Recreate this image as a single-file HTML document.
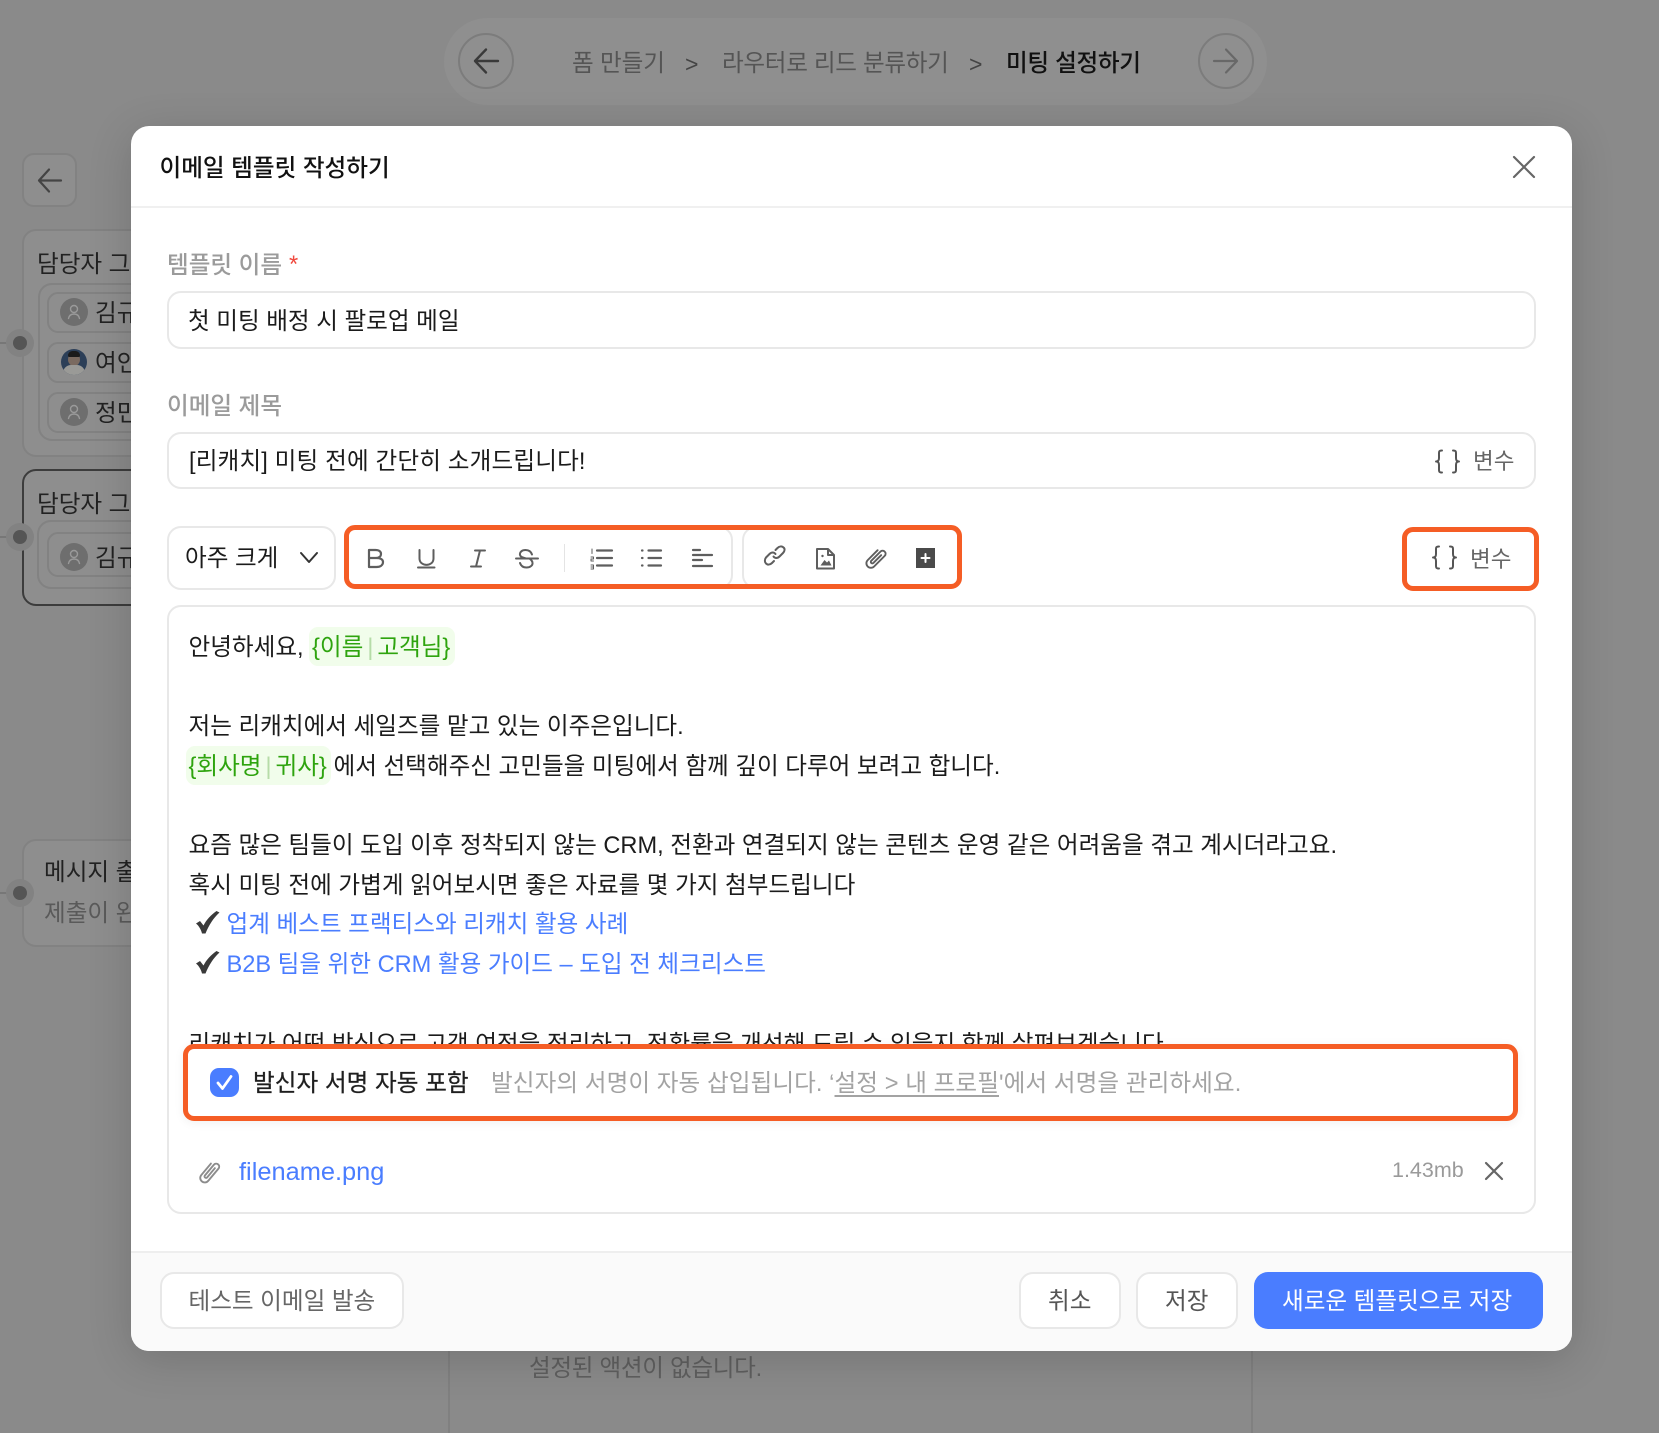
<!DOCTYPE html>
<html lang="ko"><head><meta charset="utf-8"><title>이메일 템플릿 작성하기</title>
<style>
html,body{margin:0;padding:0;width:1659px;height:1433px;overflow:hidden;background:#8a8a8a}
*{box-sizing:border-box}
body{position:relative;font-family:"Liberation Sans","Noto Sans CJK KR",sans-serif;font-size:23.6px;color:#1b1b1b}
.a{position:absolute}
.t{position:absolute;white-space:nowrap;line-height:40px;height:40px;margin-top:-18px}
.box{position:absolute;border:2px solid #e8e8e8;border-radius:14px;background:#fff}
.bg{position:absolute;border:2px solid #828282;border-radius:14px;background:#8e8e8e}
.or{position:absolute;border:5px solid #f55d25;border-radius:11px}
.dot{position:absolute;width:28px;height:28px;border-radius:50%;background:#828282}
.dot:after{content:"";position:absolute;left:7px;top:7px;width:14px;height:14px;border-radius:50%;background:#555}
.av{position:absolute;width:28px;height:28px;border-radius:50%;background:#6e6e6e}
svg{position:absolute;overflow:visible;fill:none;stroke-linecap:round;stroke-linejoin:round}
.chip{color:#2ea40e;background:#f1fdeb;border-radius:9px;position:absolute;height:39px}
.link{color:#4a7dff}
.btn{position:absolute;border:2px solid #e8e8e8;border-radius:14px;background:#fff}
.pipe{color:#b6dca8;font-size:24px;margin:0 3.900px}
.ck{fill:#3a3a3a}
</style></head><body>

<!-- backdrop -->
<div class="a" style="left:444px;top:18px;width:823px;height:87px;border-radius:44px;background:#8f8f8f"></div>
<div class="a" style="left:458px;top:33px;width:56px;height:56px;border-radius:50%;border:2px solid #7c7c7c;background:#8f8f8f"></div>
<svg style="left:474px;top:47px" width="26" height="28" stroke="#3a3a3a" stroke-width="2.4"><path d="M1 14H24M12 2.500L1 14L12 25.500"/></svg>
<div class="t" style="left:572px;top:62px;color:#555;letter-spacing:-.1px">폼 만들기</div>
<div class="t" style="left:685px;top:62px;color:#444;font-size:23px">&gt;</div>
<div class="t" style="left:722px;top:62px;color:#555;letter-spacing:-.3px">라우터로 리드 분류하기</div>
<div class="t" style="left:969px;top:62px;color:#444;font-size:23px">&gt;</div>
<div class="t" style="left:1006px;top:62px;color:#111;font-weight:500;letter-spacing:-.3px">미팅 설정하기</div>
<div class="a" style="left:1198px;top:33px;width:56px;height:56px;border-radius:50%;border:2px solid #7c7c7c"></div>
<svg style="left:1212px;top:47px" width="26" height="28" stroke="#686868" stroke-width="2.2"><path d="M2 14H25M14 2.500L25 14L14 25.500"/></svg>

<div class="a" style="left:22px;top:153px;width:55px;height:54px;border:2px solid #828282;border-radius:12px;background:#8e8e8e"></div>
<svg style="left:37px;top:168px" width="26" height="26" stroke="#444" stroke-width="2.2"><path d="M2 12.500H24M12 1.500L2 12.500L12 23.500"/></svg>

<div class="bg" style="left:22px;top:229px;width:200px;height:228px"></div>
<div class="t" style="left:37px;top:263px;color:#222">담당자 그룹</div>
<div class="bg" style="left:38px;top:283px;width:200px;height:158px"></div>
<div class="bg" style="left:47px;top:292px;width:200px;height:41px;border-radius:11px"></div>
<div class="bg" style="left:47px;top:342px;width:200px;height:41px;border-radius:11px"></div>
<div class="bg" style="left:47px;top:392px;width:200px;height:41px;border-radius:11px"></div>
<div class="av" style="left:60px;top:298px"></div>
<svg style="left:60px;top:298px" width="28" height="28" stroke="#9a9a9a" stroke-width="1.4"><circle cx="14" cy="11" r="3.500"/><path d="M8.500 20.500c.6-3 2.700-4.500 5.500-4.500s4.900 1.500 5.500 4.500"/></svg>
<div class="av" style="left:61px;top:349px;width:26px;height:26px;background:#2c3f58;overflow:hidden">
<div class="a" style="left:7px;top:4px;width:12px;height:13px;border-radius:50%;background:#7a6a60"></div>
<div class="a" style="left:7px;top:2px;width:12px;height:6px;border-radius:6px 6px 2px 2px;background:#1b1b1b"></div>
<div class="a" style="left:2px;top:16px;width:22px;height:12px;border-radius:8px 8px 0 0;background:#9a9a97"></div></div>
<div class="av" style="left:60px;top:398px"></div>
<svg style="left:60px;top:398px" width="28" height="28" stroke="#9a9a9a" stroke-width="1.4"><circle cx="14" cy="11" r="3.500"/><path d="M8.500 20.500c.6-3 2.700-4.500 5.500-4.500s4.900 1.500 5.500 4.500"/></svg>
<div class="t" style="left:95px;top:312px;color:#222">김규리</div>
<div class="t" style="left:95px;top:362px;color:#222">여인영</div>
<div class="t" style="left:95px;top:412px;color:#222">정민수</div>
<div class="a" style="left:0;top:342px;width:8px;height:2px;background:#777"></div>
<div class="dot" style="left:6px;top:329px"></div>

<div class="bg" style="left:22px;top:469px;width:200px;height:137px;border-color:#3c3c3c"></div>
<div class="t" style="left:37px;top:503px;color:#222">담당자 그룹</div>
<div class="bg" style="left:37px;top:520px;width:200px;height:69px"></div>
<div class="bg" style="left:47px;top:532px;width:200px;height:45px;border-radius:11px"></div>
<div class="av" style="left:60px;top:543px"></div>
<svg style="left:60px;top:543px" width="28" height="28" stroke="#9a9a9a" stroke-width="1.4"><circle cx="14" cy="11" r="3.500"/><path d="M8.500 20.500c.6-3 2.700-4.500 5.500-4.500s4.900 1.500 5.500 4.500"/></svg>
<div class="t" style="left:95px;top:557px;color:#222">김규리</div>
<div class="a" style="left:0;top:536px;width:8px;height:2px;background:#777"></div>
<div class="dot" style="left:6px;top:523px"></div>

<div class="bg" style="left:22px;top:839px;width:200px;height:108px"></div>
<div class="t" style="left:44px;top:871px;color:#222">메시지 출력</div>
<div class="t" style="left:44px;top:912px;color:#5a5a5a">제출이 완료</div>
<div class="a" style="left:0;top:892px;width:8px;height:2px;background:#777"></div>
<div class="dot" style="left:6px;top:879px"></div>

<div class="a" style="left:448px;top:1300px;width:805px;height:140px;border-left:2px solid #808080;border-right:2px solid #808080;background:#8a8a8a"></div>
<div class="t" style="left:529px;top:1367px;color:#5f5f5f;letter-spacing:-.3px">설정된 액션이 없습니다.</div>

<!-- modal -->
<div class="a" style="left:131px;top:126px;width:1441px;height:1225px;background:#fff;border-radius:18px;box-shadow:0 8px 44px rgba(0,0,0,.16);overflow:hidden">
  <div class="a" style="left:0;top:80px;width:100%;height:2px;background:#f0f0f0"></div>
  <div class="a" style="left:0;top:1125px;width:100%;height:100px;background:#fafafa;border-top:2px solid #eeeeee"></div>
</div>
<div class="t" style="left:159.500px;top:167px;font-weight:500;color:#111">이메일 템플릿 작성하기</div>
<svg style="left:1513px;top:156px" width="22" height="22" stroke="#666" stroke-width="2.2"><path d="M1 1L21 21M21 1L1 21"/></svg>

<div class="t" style="left:167px;top:264px;color:#9b9b9b;font-weight:500">템플릿 이름</div>
<div class="t" style="left:289px;top:263px;color:#f0493e;font-weight:500">*</div>
<div class="box" style="left:167px;top:291px;width:1369px;height:58px"></div>
<div class="t" style="left:188px;top:320px">첫 미팅 배정 시 팔로업 메일</div>

<div class="t" style="left:167px;top:405px;color:#9b9b9b;font-weight:500">이메일 제목</div>
<div class="box" style="left:167px;top:432px;width:1369px;height:57px"></div>
<div class="t" style="left:189px;top:460px;letter-spacing:.15px">[리캐치] 미팅 전에 간단히 소개드립니다!</div>
<svg style="left:1435px;top:449px" width="25" height="25" stroke="#555" stroke-width="2"><path d="M7 1.500C3.500 1.500 4 3 4 6.500V9C4 11 3.500 12.500 1 12.500C3.500 12.500 4 14 4 16V18.500C4 22 3.500 23.500 7 23.500M18 1.500C21.500 1.500 21 3 21 6.500V9C21 11 21.500 12.500 24 12.500C21.500 12.500 21 14 21 16V18.500C21 22 21.500 23.500 18 23.500"/></svg>
<div class="t" style="left:1473px;top:460px;color:#666;font-size:22.500px">변수</div>

<!-- toolbar -->
<div class="box" style="left:167px;top:526px;width:169px;height:64px"></div>
<div class="t" style="left:185px;top:557px">아주 크게</div>
<svg style="left:300px;top:552px" width="18" height="11" stroke="#333" stroke-width="2"><path d="M1 1L9 10L17 1"/></svg>
<div class="box" style="left:345px;top:526px;width:388px;height:63px"></div>
<div class="box" style="left:742px;top:526px;width:218px;height:63px"></div>
<div class="a" style="left:564px;top:544px;width:1px;height:28px;background:#e4e4e4"></div>

<svg style="left:355px;top:535px" width="370" height="50" stroke="#5e5e5e" stroke-width="2">
<path stroke-width="2.200" d="M14 15V32H21.500C25.500 32 28 30 28 27C28 24.500 25.500 23 21.500 23H14M14 23H20.500C24 23 26 21.500 26 19C26 16.500 24 15 20.500 15H14Z"/>
<path d="M64.500 15V23.500C64.500 32 78.500 32 78.500 23.500V15M63 32.500H79.500"/>
<path d="M120 15.500H130M116 31.500H126M125 15.500L121 31.500"/>
<path d="M177 19.500C176 16.500 173.500 15 170.500 15C167 15 164.500 17 165 20C165.500 22 167.500 22.500 171 23.500M165 28C166 31 168.500 32.500 171.500 32.500C175 32.500 178 30.500 177.500 27.500C177.300 26 176.300 25 175 24M161 23.500H183"/>
<path stroke-width="1" d="M237 14V18.500M236 22H238.500V24H236V26H238.500M236 30H238.500V34H236M236 32H238.500"/>
<path stroke-width="2.200" d="M242 15.500H257M242 23H257M242 30.500H257"/>
<path stroke-width="2.200" d="M287 15.500H287.500M287 23H287.500M287 30.500H287.500M293.500 15.500H306M293.500 23H306M293.500 30.500H306"/>
<path stroke-width="2.200" d="M338 15H345M338 20H357M338 25H347M338 31H357"/>
</svg>

<svg style="left:760px;top:535px" width="190" height="50" stroke="#5e5e5e" stroke-width="2">
<path stroke-width="2" d="M13.500 21.500C15 23.500 17.500 23.500 19.500 21.500L23 18C25 16 25 13.500 23.500 12.500C22 11 19.500 11 17.500 13L15.500 15M15.500 19C14 17 11.500 17 9.500 19L6 22.500C4.500 24.500 4.500 27 6 28.500C7.500 30 10 30 12 28L14 26"/>
<path stroke-width="2" d="M57 14H68L74 20V33.500H57ZM68 14V20H74"/>
<circle cx="62.500" cy="21" r="1.200" style="fill:#5e5e5e;stroke:none"/>
<path style="fill:#5e5e5e;stroke:none" d="M60.500 30.500L64.500 25L67 27.500L69 25.500L71.500 30.500Z"/>
<path stroke-width="1.900" transform="translate(115.500 23) rotate(-45)" d="M7 -4H-7A4.500 4.500 0 0 0 -7 5H8A3 3 0 0 0 8 -1H-5A1.500 1.500 0 0 0 -5 2H6"/>
<rect x="156" y="13" width="19" height="20" style="fill:#4a4a4a;stroke:none"/>
<path stroke="#fff" stroke-width="2" d="M165.500 19V27M161.500 23H169.500"/>
</svg>

<svg style="left:1432px;top:545px" width="25" height="25" stroke="#555" stroke-width="2"><path d="M7 1.500C3.500 1.500 4 3 4 6.500V9C4 11 3.500 12.500 1 12.500C3.500 12.500 4 14 4 16V18.500C4 22 3.500 23.500 7 23.500M18 1.500C21.500 1.500 21 3 21 6.500V9C21 11 21.500 12.500 24 12.500C21.500 12.500 21 14 21 16V18.500C21 22 21.500 23.500 18 23.500"/></svg>
<div class="t" style="left:1470px;top:558px;color:#666;font-size:22.500px">변수</div>

<!-- editor -->
<div class="box" style="left:167px;top:605px;width:1369px;height:609px"></div>
<div class="chip" style="left:309px;top:627px;width:146px"></div>
<div class="chip" style="left:186px;top:746px;width:145px"></div>
<div class="t" style="left:188.500px;top:646px">안녕하세요,</div>
<div class="t" style="left:312px;top:646px;color:#2ea40e">{이름<span class="pipe">|</span>고객님}</div>
<div class="t" style="left:188.500px;top:725px">저는 리캐치에서 세일즈를 맡고 있는 이주은입니다.</div>
<div class="t" style="left:188.500px;top:765px;color:#2ea40e">{회사명<span class="pipe">|</span>귀사}</div>
<div class="t" style="left:333.500px;top:765px">에서 선택해주신 고민들을 미팅에서 함께 깊이 다루어 보려고 합니다.</div>
<div class="t" style="left:188.500px;top:844px">요즘 많은 팀들이 도입 이후 정착되지 않는 CRM, 전환과 연결되지 않는 콘텐츠 운영 같은 어려움을 겪고 계시더라고요.</div>
<div class="t" style="left:188.500px;top:884px">혹시 미팅 전에 가볍게 읽어보시면 좋은 자료를 몇 가지 첨부드립니다</div>
<svg style="left:196px;top:911px" width="24" height="24"><path class="ck" d="M0 12.500L4 10L7.500 14.500C10.500 8.500 15 4 20.500 0L23.500 1.500C17 7.500 13 14 9.500 22.500H6C5 18.500 3 15 0 12.500Z"/></svg>
<div class="t link" style="left:226.500px;top:923px">업계 베스트 프랙티스와 리캐치 활용 사례</div>
<svg style="left:196px;top:951px" width="24" height="24"><path class="ck" d="M0 12.500L4 10L7.500 14.500C10.500 8.500 15 4 20.500 0L23.500 1.500C17 7.500 13 14 9.500 22.500H6C5 18.500 3 15 0 12.500Z"/></svg>
<div class="t link" style="left:226.500px;top:963px">B2B 팀을 위한 CRM 활용 가이드 – 도입 전 체크리스트</div>
<div class="t" style="left:188.500px;top:1043px">리캐치가 어떤 방식으로 고객 여정을 정리하고, 전환률을 개선해 드릴 수 있을지 함께 살펴보겠습니다.</div>

<!-- signature row -->
<div class="a" style="left:183px;top:1044px;width:1335px;height:77px;background:#fff;border-radius:11px;box-shadow:0 2px 10px rgba(0,0,0,.06)"></div>
<div class="a" style="left:210px;top:1068px;width:29px;height:29px;border-radius:9px;background:#4a7dff"></div>
<svg style="left:210px;top:1068px" width="29" height="29" stroke="#fff" stroke-width="2.800"><path d="M8 15L12.500 20.500L21 8.500"/></svg>
<div class="t" style="left:253px;top:1082px;color:#1f1f1f;-webkit-text-stroke:.25px #1f1f1f;letter-spacing:.05px">발신자 서명 자동 포함</div>
<div class="t" style="left:491px;top:1082px;color:#a3a3a3;letter-spacing:.08px">발신자의 서명이 자동 삽입됩니다. ‘<span style="text-decoration:underline;text-underline-offset:4px">설정 &gt; 내 프로필</span>'에서 서명을 관리하세요.</div>
<div class="or" style="left:183px;top:1044px;width:1335px;height:77px"></div>

<svg style="left:199px;top:1160px" width="21" height="23" stroke="#8c8c8c" stroke-width="1.900"><path transform="translate(10.500 11.500) rotate(-50)" d="M7 -4H-8A4.500 4.500 0 0 0 -8 5H8A3 3 0 0 0 8 -1H-6A1.500 1.500 0 0 0 -6 2H6"/></svg>
<div class="t link" style="left:239px;top:1170px;font-size:25.400px">filename.png</div>
<div class="t" style="left:1392px;top:1168px;color:#9a9a9a;font-size:21.500px">1.43mb</div>
<svg style="left:1484.500px;top:1162px" width="18" height="18" stroke="#666" stroke-width="2.2"><path d="M1 1L17 17M17 1L1 17"/></svg>

<!-- footer -->
<div class="btn" style="left:160px;top:1272px;width:244px;height:57px"></div>
<div class="t" style="left:188.500px;top:1300px;color:#666">테스트 이메일 발송</div>
<div class="btn" style="left:1019px;top:1272px;width:102px;height:57px"></div>
<div class="t" style="left:1048px;top:1300px;color:#555">취소</div>
<div class="btn" style="left:1136px;top:1272px;width:102px;height:57px"></div>
<div class="t" style="left:1165px;top:1300px;color:#555">저장</div>
<div class="a" style="left:1254px;top:1271.500px;width:289px;height:57.500px;background:#4a7dff;border-radius:14px"></div>
<div class="t" style="left:1282px;top:1300px;color:#fff">새로운 템플릿으로 저장</div>

<!-- highlight outlines -->
<div class="or" style="left:344px;top:525px;width:618px;height:64px"></div>
<div class="or" style="left:1402px;top:527px;width:137px;height:64px"></div>
</body></html>
